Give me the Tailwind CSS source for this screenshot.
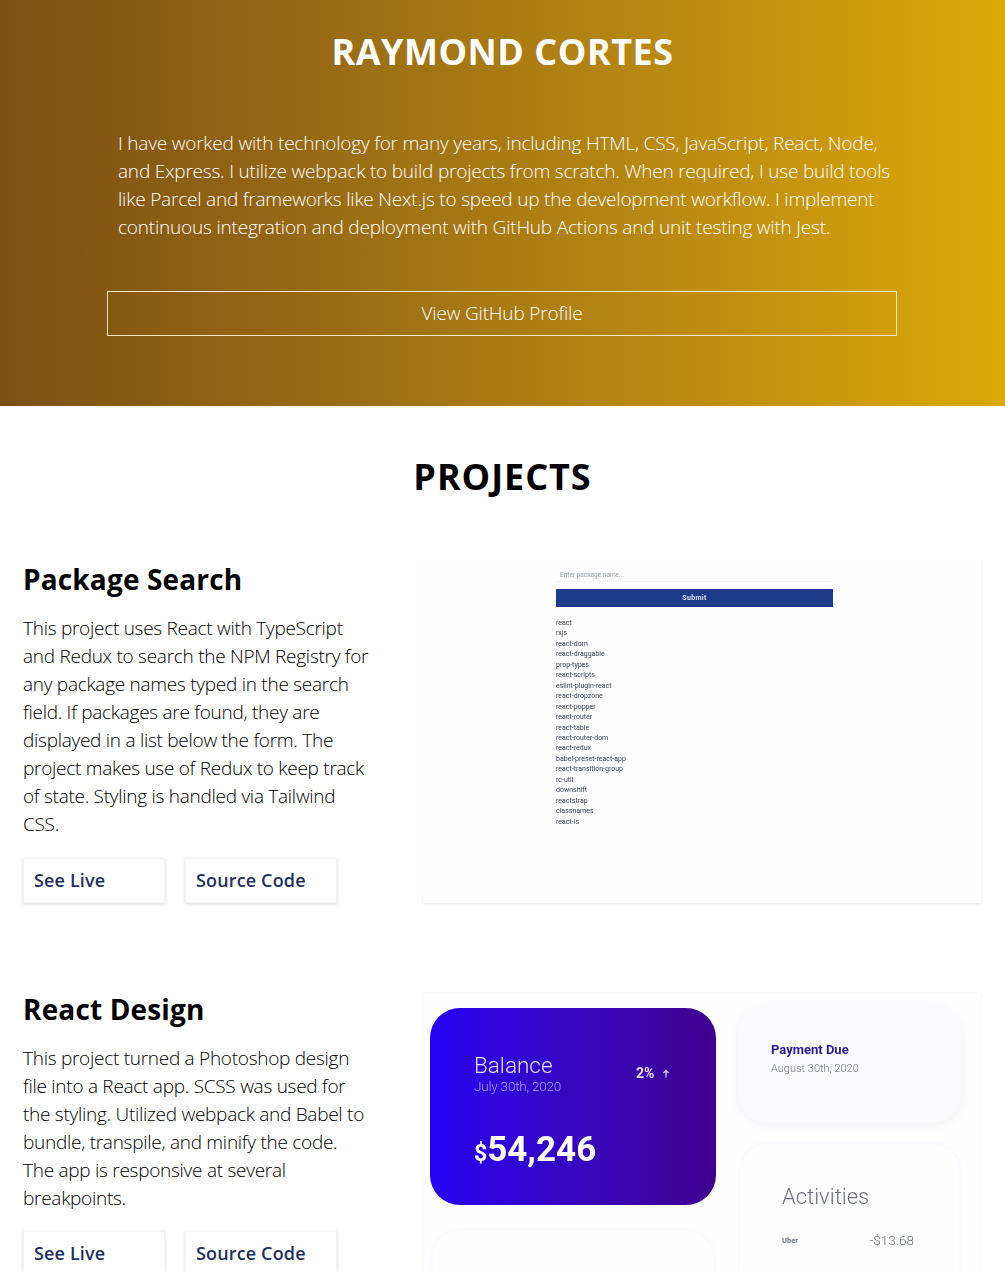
<!DOCTYPE html>
<html lang="en">

<head>
    <meta charset="UTF-8">
    <meta name="viewport" content="width=device-width, initial-scale=1.0">
    <script src="https://cdn.jsdelivr.net/npm/@tailwindcss/browser@4"></script>
    <title>Raymond Cortes</title>
</head>

<body class="bg-white font-['Open_Sans',sans-serif] text-black">
    <div class="h-[1271px] overflow-hidden">
        <header class="h-[406px] bg-gradient-to-r from-[#7a4f14] to-[#dca908] text-white pt-[26px]">
            <h1 class="text-center text-[36px] leading-[52px] font-bold tracking-[0.5px]">RAYMOND CORTES</h1>
            <p class="mt-[51px] ml-[118px] w-[780px] text-[19px] leading-[28px] font-light tracking-[-0.2px]">I have worked with technology for many years, including HTML, CSS, JavaScript, React, Node, and Express. I utilize webpack to build projects from scratch. When required, I use build tools like Parcel and frameworks like Next.js to speed up the development workflow. I implement continuous integration and deployment with GitHub Actions and unit testing with Jest.</p>
            <a class="mt-[50px] ml-[107px] w-[790px] h-[45px] border border-[#f3e6bd] flex items-center justify-center text-[19px] font-light tracking-[-0.17px]">View GitHub Profile</a>
        </header>

        <h2 class="mt-[45px] text-center text-[36px] leading-[52px] font-bold tracking-[0.95px]">PROJECTS</h2>

        <section class="mt-[57px] flex pl-[23px] pr-[24px]">
            <div class="w-[400px] shrink-0">
                <h3 class="-mt-px text-[28px] leading-[40px] font-bold tracking-[0.15px]">Package Search</h3>
                <p class="mt-[15px] w-[348px] text-[19px] leading-[28px] font-light tracking-[-0.27px]">This project uses React with TypeScript and Redux to search the NPM Registry for any package names typed in the search field. If packages are found, they are displayed in a list below the form. The project makes use of Redux to keep track of state. Styling is handled via Tailwind CSS.</p>
                <div class="mt-[20px] flex gap-[20px]">
                    <a class="w-[142px] h-[45px] pl-[10px] flex items-center bg-white border border-gray-100 shadow-[0_1px_3px_rgba(60,50,90,0.18)] text-[18px] font-semibold text-[#1f2f60] tracking-[0.15px]">See Live</a>
                    <a class="w-[152px] h-[45px] pl-[10px] flex items-center bg-white border border-gray-100 shadow-[0_1px_3px_rgba(60,50,90,0.18)] text-[18px] font-semibold text-[#1f2f60] tracking-[0.15px]">Source Code</a>
                </div>
            </div>
            <div class="w-[558px] h-[343px] bg-[#fefefe] shadow-[0_1px_2px_rgba(90,80,120,0.14)] pl-[133px] font-['Roboto',sans-serif]">
                <div class="w-[277px] pt-[9px]">
                    <div class="h-[13px] pl-[4px] border-b border-gray-100 text-[6.5px] leading-[12px] text-gray-400 blur-[0.3px]">Enter package name...</div>
                    <div class="mt-[7px] h-[18px] bg-[#1e3a8a] flex items-center justify-center text-[7px] font-bold tracking-[0.3px] text-[#dbe2f5] blur-[0.2px]">Submit</div>
                    <ul class="mt-[11px] text-[7px] leading-[10.45px] text-gray-700 blur-[0.3px]">
                        <li>react</li>
                        <li>rxjs</li>
                        <li>react-dom</li>
                        <li>react-draggable</li>
                        <li>prop-types</li>
                        <li>react-scripts</li>
                        <li>eslint-plugin-react</li>
                        <li>react-dropzone</li>
                        <li>react-popper</li>
                        <li>react-router</li>
                        <li>react-table</li>
                        <li>react-router-dom</li>
                        <li>react-redux</li>
                        <li>babel-preset-react-app</li>
                        <li>react-transition-group</li>
                        <li>rc-util</li>
                        <li>downshift</li>
                        <li>reactstrap</li>
                        <li>classnames</li>
                        <li>react-is</li>
                    </ul>
                </div>
            </div>
        </section>

        <section class="mt-[87px] flex pl-[23px] pr-[24px]">
            <div class="w-[400px] shrink-0">
                <h3 class="-mt-px text-[28px] leading-[40px] font-bold tracking-[0.15px]">React Design</h3>
                <p class="mt-[15px] w-[348px] text-[19px] leading-[28px] font-light tracking-[-0.27px]">This project turned a Photoshop design file into a React app. SCSS was used for the styling. Utilized webpack and Babel to bundle, transpile, and minify the code. The app is responsive at several breakpoints.</p>
                <div class="mt-[19px] flex gap-[20px]">
                    <a class="w-[142px] h-[45px] pl-[10px] flex items-center bg-white border border-gray-100 shadow-[0_1px_3px_rgba(60,50,90,0.18)] text-[18px] font-semibold text-[#1f2f60] tracking-[0.15px]">See Live</a>
                    <a class="w-[152px] h-[45px] pl-[10px] flex items-center bg-white border border-gray-100 shadow-[0_1px_3px_rgba(60,50,90,0.18)] text-[18px] font-semibold text-[#1f2f60] tracking-[0.15px]">Source Code</a>
                </div>
            </div>
            <div class="mt-[3px] w-[558px] h-[400px] bg-[#fefefe] shadow-[0_0_2px_rgba(90,80,120,0.08)] pl-[7px] pt-[15px] flex gap-[22px] font-['Roboto',sans-serif]">
                <div class="w-[286px] flex flex-col gap-[23px]">
                    <div class="h-[197px] shrink-0 rounded-[30px] bg-gradient-to-r from-[#2400f2] to-[#3f008f] pl-[44px] pt-[44px] text-white">
                        <div class="flex">
                            <div class="w-[162px]">
                                <div class="text-[22.5px] leading-[27px] font-light text-[#e4dcff] blur-[0.2px]">Balance</div>
                                <div class="text-[13.5px] leading-[15px] font-light text-[#a99cf5] blur-[0.2px] -tracking-[0.2px]">July 30th, 2020</div>
                            </div>
                            <div class="pt-[11px] flex items-center h-[32px] gap-[8px] text-[14px] font-bold text-[#eadcff] blur-[0.2px]">
                                2%
                                <svg width="8" height="9" viewBox="0 0 8 9" fill="none" stroke="#d9c8ff" stroke-width="1.3"><path d="M4 8.5V1.5M1.5 4L4 1.5L6.500 4" /></svg>
                            </div>
                        </div>
                        <div class="mt-[34px] font-bold leading-[44px] blur-[0.2px]"><span class="text-[23px]">$</span><span class="text-[35px]">54,246</span></div>
                    </div>
                    <div class="h-[200px] shrink-0 rounded-[30px] border-[3px] border-[#fbfaff] bg-[#fefefe]"></div>
                </div>
                <div class="w-[224px] -mt-[3px] flex flex-col gap-[18px]">
                    <div class="h-[118px] shrink-0 rounded-[30px] bg-[#fcfbff] shadow-[0_2px_8px_rgba(110,90,190,0.07)] pl-[33px] pt-[36px]">
                        <div class="text-[13px] leading-[17px] font-bold text-[#2b1c8c] blur-[0.2px]">Payment Due</div>
                        <div class="mt-[3px] text-[11px] leading-[16px] text-gray-500 font-light blur-[0.2px]">August 30th, 2020</div>
                    </div>
                    <div class="h-[260px] shrink-0 rounded-[30px] border-[3px] border-[#fafaff] pl-[41px] pt-[38px]">
                        <div class="text-[22px] leading-[30px] font-light text-gray-500 blur-[0.2px]">Activities</div>
                        <div class="mt-[18px] w-[132px] flex items-center justify-between blur-[0.2px]">
                            <span class="text-[7.5px] font-bold text-gray-500">Uber</span>
                            <span class="text-[13.5px] font-light text-gray-500">-$13.68</span>
                        </div>
                    </div>
                </div>
            </div>
        </section>
    </div>
</body>

</html>
